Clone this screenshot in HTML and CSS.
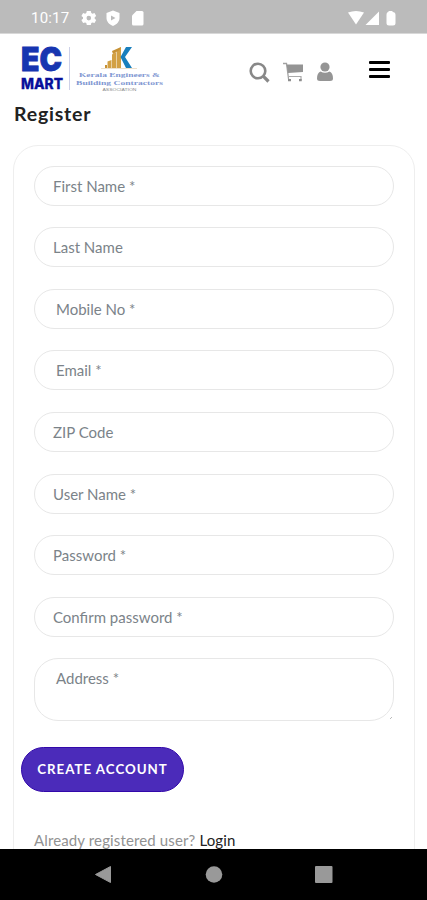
FILE: index.html
```html
<!DOCTYPE html>
<html lang="en">
<head>
<meta charset="utf-8">
<title>Register</title>
<link rel="stylesheet" href="styles.css">
</head>
<body>
<div class="screen">
  <div class="status">
    <span class="clock">10:17</span>
    <svg class="status-left" width="66" height="18" viewBox="0 0 66 18" fill="#fff">
      <path fill-rule="evenodd" d="M5.8 2h4l.5 2 1.2.7 2-.7 1.7 3-1.5 1.3v1.5l1.5 1.3-1.7 3-2-.7-1.2.7-.5 2h-4l-.5-2-1.2-.7-2 .7-1.700-3L2 9.800V8.300L.4 7l1.700-3 2 .7L5.300 4zM7.800 6.800a2.300 2.300 0 1 0 0 4.600 2.300 2.300 0 0 0 0-4.600z"/>
      <path fill-rule="evenodd" d="M32 1.500l6.500 2.500v5c0 3.500-2.500 6.300-6.500 8-4-1.700-6.500-4.500-6.500-8V4zM30 6.500v5l4.500-2.500z"/>
      <path d="M55.500 2H61q1.500 0 1.500 1.500v11.500q0 1.500-1.500 1.500h-8.500q-1.500 0-1.500-1.500V6.500z"/>
    </svg>
    <svg class="status-right" width="50" height="18" viewBox="0 0 50 18" fill="#fff">
      <path d="M0 3.500Q8 .5 16 3.500L8 15.500z"/>
      <path d="M31 2.500V16H17.500z"/>
      <path d="M40.500 2h4v1q3 0 3 3v8q0 2.500-2.500 2.500h-4q-2.500 0-2.500-2.500V6q0-3 2-3z"/>
    </svg>
  </div>

  <header class="header">
    <svg class="logo" width="150" height="54" viewBox="0 0 150 54">
      <text x="0" y="28" class="logo-ec" textLength="41" lengthAdjust="spacingAndGlyphs">EC</text>
      <text x="0" y="46.200" class="logo-mart" textLength="42" lengthAdjust="spacingAndGlyphs">MART</text>
      <path d="M48.500 4v43" stroke="#cdd1e8"/>
      <path d="M86.500 18.500l4-1.500V25h-4zM91 11.500l4.200-2.500v16H91zM95.700 7l4.300-3v21h-4.300z" fill="#d2a044"/>
      <path d="M84 22h2v3h-2zM91 8l9-4-1.500 3-6.500 4z" fill="#c69135"/>
      <path d="M105 4h6l-7 10 7 11h-6l-5.500-11z" fill="#197fbd"/>
      <path d="M80 25.500h36" stroke="#e5d2b4" stroke-width=".7"/>
      <text x="58" y="34" class="logo-name" textLength="81" lengthAdjust="spacingAndGlyphs">Kerala Engineers &amp;</text>
      <text x="55" y="41.500" class="logo-name" textLength="87" lengthAdjust="spacingAndGlyphs">Building Contractors</text>
      <text x="81.500" y="47.500" class="logo-sub" textLength="34" lengthAdjust="spacingAndGlyphs">ASSOCIATION</text>
    </svg>
    <div class="tools">
      <svg width="21" height="22" viewBox="0 0 21 22" fill="none" stroke="#888">
        <circle cx="9" cy="9" r="7.300" stroke-width="2.600"/>
        <path d="M14.200 14.200L19.500 19.500" stroke-width="3.200"/>
      </svg>
      <svg width="21" height="20" viewBox="0 0 21 20">
        <path d="M0 1.500h3.500l2.200 16.500" fill="none" stroke="#a2a2a2" stroke-width="1.300"/>
        <path d="M3.500 2.500h16.500v7.500L5 11z" fill="#949494"/>
        <path d="M5.500 14.500h12.500v4" fill="none" stroke="#aaa" stroke-width="1.200"/>
        <path d="M5 17h3v2.300H5zM16 17h2.700v2.300H16z" fill="#8e8e8e"/>
      </svg>
      <svg width="17" height="20" viewBox="0 0 17 20" fill="#959595">
        <circle cx="8" cy="5" r="4.600"/>
        <path d="M3.500 9.500q4.500 2.500 9 0 3.500 1.500 3.500 7 0 2.500-3 2.500H3q-3 0-3-2.500 0-5.500 3.500-7z"/>
      </svg>
    </div>
    <div class="burger"><i></i><i></i><i></i></div>
  </header>

  <main class="main">
    <h1>Register</h1>
    <form class="card">
      <div class="field">First Name *</div>
      <div class="field">Last Name</div>
      <div class="field inset">Mobile No *</div>
      <div class="field inset">Email *</div>
      <div class="field">ZIP Code</div>
      <div class="field">User Name *</div>
      <div class="field">Password *</div>
      <div class="field">Confirm password *</div>
      <div class="field inset area">Address *<svg class="grip" width="4" height="4" viewBox="0 0 4 4"><path d="M1 3L3 1" stroke="#bbb"/></svg></div>
      <div class="submit">CREATE ACCOUNT</div>
      <p class="signin">Already registered user? <a>Login</a></p>
    </form>
  </main>

  <nav class="nav">
    <svg width="427" height="51" viewBox="0 0 427 51" fill="#999">
      <path d="M95.500 25.500L110.500 17.500v16z" stroke="#999" stroke-linejoin="round"/>
      <circle cx="214" cy="25.500" r="8.300"/>
      <rect x="315" y="17" width="17.500" height="17" rx="1"/>
    </svg>
  </nav>
</div>
</body>
</html>
```
FILE: styles.css
```css
* { box-sizing: border-box; }
body { margin: 0; background: #fff; font-family: Lato, sans-serif; }
.screen { width: 427px; height: 900px; display: flex; flex-direction: column; overflow: hidden; }

.status { flex: none; height: 34px; display: flex; align-items: center; padding: 2px 29px 0 31px; background: #bbb; border-bottom: 1px solid #d8d8d8; color: #fff; }
.clock { width: 50px; font: 15px Roboto, sans-serif; letter-spacing: .2px; }
.status-right { margin-left: auto; }

.header { flex: none; height: 66px; display: flex; align-items: flex-start; padding: 8px 37px 0 21px; }
.logo { flex: none; margin-top: 1px; overflow: visible; }
.logo-ec { font: 900 32.500px/1 Inter, sans-serif; fill: #1735b0; stroke: #1735b0; stroke-width: .8px; }
.logo-mart { font: 800 14.500px/1 Inter, sans-serif; fill: #08109a; stroke: #08109a; stroke-width: .3px; }
.logo-name { font: bold 7px "Liberation Serif", serif; fill: #7f97d2; }
.logo-sub { font: 4px "Liberation Sans", sans-serif; fill: #888; }
.tools { display: flex; gap: 13px; margin: 20px 0 0 78px; }
.burger { display: grid; gap: 4px; margin: 19px 0 0 auto; }
.burger i { width: 21px; height: 3px; border-radius: 1px; background: #000; }

.main { flex: 1; min-height: 0; overflow: hidden; padding: 0 12px 0 13px; }
h1 { margin: 1px 0 19px 1px; font: bold 19.500px/25px Lato, sans-serif; letter-spacing: .8px; color: #222; }
.card { display: flex; flex-direction: column; height: 760px; padding: 19.800px 20px; border: 1.500px solid #eee; border-radius: 25px; }
.field { flex: none; height: 40px; margin-bottom: 21.570px; padding: 0 18px; border: 1px solid #e7e7e7; border-radius: 20px; font-size: 15px; line-height: 38px; color: #7b8389; }
.inset { padding-left: 21px; }
.area { position: relative; height: 63px; border-radius: 24px; margin-bottom: 25.500px; }
.grip { position: absolute; right: 0; bottom: 0; }
.submit { flex: none; width: 163px; height: 45px; margin-left: -13px; border: 1px solid #3208aa; border-radius: 23px; background: #4b2bba; color: #fff; font-size: 13.300px; font-weight: bold; letter-spacing: 1px; line-height: 43.500px; text-align: center; }
.signin { margin: 38px 0 0; font-size: 15px; letter-spacing: .13px; line-height: 20px; color: #929292; white-space: nowrap; }
.signin a { color: #222; }

.nav { flex: none; height: 51px; background: #000; }
.nav svg { display: block; }
```
